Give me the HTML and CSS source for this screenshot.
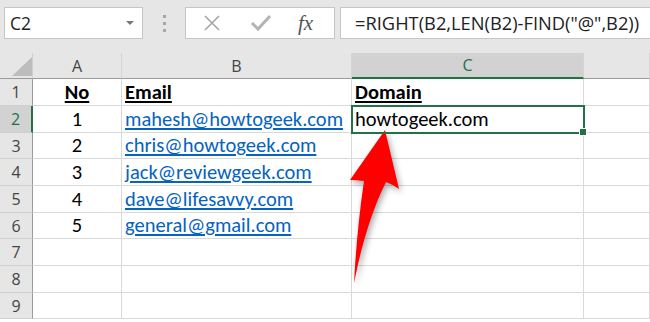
FILE: index.html
```html
<!DOCTYPE html>
<html lang="en">
    <head>
        <meta charset="UTF-8">
        <title>Excel - RIGHT / FIND</title>
        <link rel="stylesheet" href="styles.css">
    </head>
    <body>
        <div class="toolbar">
            <div class="name-box">
                <span>C2</span>
                <span class="caret"></span>
            </div>
            <div class="grip"><i></i><i></i><i></i></div>
            <div class="fx-box">
                <svg class="ico" width="20" height="20" viewBox="0 0 20 20">
                    <path d="M3 3 L17 17 M17 3 L3 17" stroke="#a6a6a6" stroke-width="1.6" fill="none"/>
                </svg>
                <svg class="ico" width="22" height="20" viewBox="0 0 22 20">
                    <path d="M2 10 L8 16 L20 3" stroke="#b3b3b3" stroke-width="3" fill="none"/>
                </svg>
                <span class="fx">fx</span>
            </div>
            <div class="formula">=RIGHT(B2,LEN(B2)-FIND("@",B2))</div>
        </div>

        <div class="sheet">
            <!-- header row -->
            <div class="corner"><span></span></div>
            <div class="col-head">A</div>
            <div class="col-head">B</div>
            <div class="col-head active">C</div>
            <div class="col-head"></div>

            <div class="row-head">1</div>
            <div class="cell center"><b>No</b></div>
            <div class="cell"><b>Email</b></div>
            <div class="cell"><b>Domain</b></div>
            <div class="cell"></div>

            <div class="row-head active">2</div>
            <div class="cell center">1</div>
            <div class="cell"><a>mahesh@howtogeek.com</a></div>
            <div class="cell selected">howtogeek.com<span class="handle"></span></div>
            <div class="cell"></div>

            <div class="row-head">3</div>
            <div class="cell center">2</div>
            <div class="cell"><a>chris@howtogeek.com</a></div>
            <div class="cell"></div>
            <div class="cell"></div>

            <div class="row-head">4</div>
            <div class="cell center">3</div>
            <div class="cell"><a>jack@reviewgeek.com</a></div>
            <div class="cell"></div>
            <div class="cell"></div>

            <div class="row-head">5</div>
            <div class="cell center">4</div>
            <div class="cell"><a>dave@lifesavvy.com</a></div>
            <div class="cell"></div>
            <div class="cell"></div>

            <div class="row-head">6</div>
            <div class="cell center">5</div>
            <div class="cell"><a>general@gmail.com</a></div>
            <div class="cell"></div>
            <div class="cell"></div>

            <div class="row-head">7</div>
            <div class="cell"></div>
            <div class="cell"></div>
            <div class="cell"></div>
            <div class="cell"></div>

            <div class="row-head">8</div>
            <div class="cell"></div>
            <div class="cell"></div>
            <div class="cell"></div>
            <div class="cell"></div>

            <div class="row-head">9</div>
            <div class="cell"></div>
            <div class="cell"></div>
            <div class="cell"></div>
            <div class="cell"></div>
        </div>

        <!-- red callout arrow -->
        <svg class="arrow" width="650" height="322" viewBox="0 0 650 322">
            <path d="M385 130 L399 189 Q392 184 386 182 Q366 222 354 283 Q357 228 364 181 Q357 180 350 180 Z" fill="#ff0000"/>
        </svg>
    </body>
</html>
```

FILE: styles.css
```css
body {
    margin: 0;
    width: 650px;
    height: 322px;
    overflow: hidden;
    background: #fff;
    font-family: "Open Sans", "Noto Sans", sans-serif;
    position: relative;
}
.toolbar {
    height: 53px;
    box-sizing: border-box;
    padding: 7px 0 0 4px;
    background: #e6e6e6;
    display: flex;
    align-items: flex-start;
}
.name-box, .fx-box, .formula {
    height: 32px;
    box-sizing: border-box;
    background: #fff;
    border: 1px solid #c6c6c6;
}
.name-box {
    width: 139px;
    display: flex;
    align-items: center;
    justify-content: space-between;
    padding: 0 8px 0 5px;
    font-size: 17.5px;
    color: #222;
}
.caret {
    border-left: 4px solid transparent;
    border-right: 4px solid transparent;
    border-top: 4px solid #777;
}
.grip {
    width: 42px;
    display: flex;
    flex-direction: column;
    align-items: center;
    gap: 4px;
    padding-top: 8px;
}
.grip i {
    width: 3px;
    height: 3px;
    background: #a6a6a6;
}
.fx-box {
    width: 150px;
    display: flex;
    align-items: center;
    padding-left: 16px;
    gap: 28px;
}
.fx {
    font-family: "Liberation Serif", "DejaVu Serif", serif;
    font-style: italic;
    font-size: 21px;
    color: #555;
    margin-left: -2px;
}
.formula {
    flex: 1;
    margin-left: 5px;
    border-right: none;
    padding-left: 14px;
    font-size: 18.3px;
    line-height: 30px;
    color: #222;
}
.sheet {
    display: grid;
    grid-template-columns: 33px 89px 230px 232px 1fr;
    grid-template-rows: 26px 27px 27px 26px 27px 27px 26px 27px 27px 26px;
}
.corner, .col-head, .row-head {
    background: #e6e6e6;
    color: #444;
    font-size: 16px;
    display: flex;
    align-items: center;
    justify-content: center;
    box-sizing: border-box;
}
.corner {
    border-right: 1px solid #cfcfcf;
    border-bottom: 1px solid #9b9b9b;
    position: relative;
}
.corner span {
    position: absolute;
    left: 12px;
    top: 4px;
    width: 20px;
    height: 19px;
    background: #bdbdbd;
    clip-path: polygon(100% 0, 100% 100%, 0 100%);
}
.col-head {
    border-right: 1px solid #d4d4d4;
    border-bottom: 1px solid #9b9b9b;
}
.col-head.active {
    background: #d2d2d2;
    color: #217346;
    border-bottom: 2px solid #217346;
}
.row-head {
    border-right: 1px solid #9b9b9b;
    border-bottom: 1px solid #cfcfcf;
}
.row-head.active {
    background: #d2d2d2;
    color: #217346;
    border-right: 2px solid #217346;
}
.cell {
    font-family: "Carlito", "Lato", sans-serif;
    font-size: 20.5px;
    color: #000;
    border-right: 1px solid #d9d9d9;
    border-bottom: 1px solid #d9d9d9;
    box-sizing: border-box;
    display: flex;
    align-items: flex-end;
    padding: 0 0 0 3px;
    white-space: nowrap;
    position: relative;
}
.cell.center {
    justify-content: center;
    padding-left: 0;
}
.cell b {
    text-decoration: underline;
}
.cell a {
    color: #0563c1;
    text-decoration: underline;
}
.cell.selected {
    outline: 2px solid #217346;
    outline-offset: -1px;
    z-index: 1;
}
.handle {
    position: absolute;
    right: -4px;
    bottom: -4px;
    width: 6px;
    height: 6px;
    background: #217346;
    border: 1px solid #fff;
}
.arrow {
    position: absolute;
    left: 0;
    top: 0;
    filter: drop-shadow(2px 3px 3px rgba(0, 0, 0, 0.35));
}
```
